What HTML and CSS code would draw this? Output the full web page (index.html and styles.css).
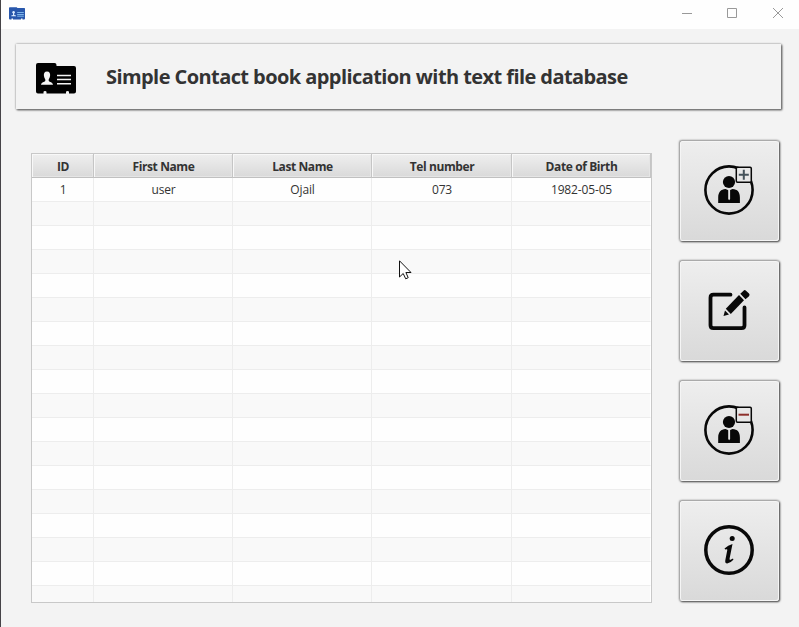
FILE: index.html
```html
<!DOCTYPE html>
<html lang="en">
<head>
<meta charset="utf-8">
<title>Contact book</title>
<link rel="stylesheet" href="styles.css">
</head>
<body>
<svg width="0" height="0" class="defs">
  <defs>
    <symbol id="person" viewBox="0 0 52 52">
      <circle cx="26" cy="27" r="23.6" fill="none" stroke="#080808" stroke-width="2.6"/>
      <circle cx="26" cy="19" r="6.1"/>
      <path d="M15.200 40V34.500C15.200 29 18 26.200 22.500 26L26 27.500L29.500 26C34.500 26.200 36.900 29 36.900 34.500V40Z"/>
      <path d="M25.200 26.500H27.100V36L26.100 37.200L25.200 36Z" fill="#e4e4e4"/>
      <rect x="33.300" y="4.200" width="15" height="15" rx="1.200" fill="#e8e8e8" stroke="#080808" stroke-width="1.500"/>
    </symbol>
  </defs>
</svg>
<div class="window">
  <header class="titlebar">
    <svg class="app-icon" width="16" height="13" viewBox="0 0 16 13"><path d="M0 1Q0 .2.800.200H7.500Q8.300.2 8.300 1H15.400Q16 1 16 1.700V11.500Q16 12.500 15 12.500H13.500V11.500H12V12.500H4V11.500H2.500V12.500H1Q0 12.500 0 11.500Z" fill="#2857ac"/><path d="M8.200 5.500H14.800M8.200 7.500H14.800M8.200 9.200H14.800" stroke="#7db5ea"/><circle cx="4.600" cy="5.200" r="1.200" fill="#dcecff"/><path d="M4 5.500H5.200V8L7 8.600V9.300H2.300V8.600L4 8Z" fill="#dcecff"/></svg>
    <svg class="controls" width="104" height="12" viewBox="0 0 104 12" fill="none" stroke="#999"><path d="M0 6.500H10"/><path d="M45.500 1.500H54.500V10.500H45.500Z"/><path d="M91 1L101 11M101 1L91 11"/></svg>
  </header>
  <main>
    <section class="banner">
      <svg class="logo" width="40" height="31" viewBox="0 0 40 31"><path d="M0 2Q0 0 2 0H18.500Q20.500 0 20.500 2V3H38Q40 3 40 5V28.500Q40 30.500 38 30.500H33V29Q33 28 31.500 28T30 29V30.500H10.500V29Q10.500 28 9 28T7.500 29V30.500H2Q0 30.500 0 28.500Z"/><path d="M11 8.500C8.500 8.500 7.700 10.300 7.900 12.500C8 14.500 9 15.500 9.300 16.500V18C8.500 19 5.200 19.300 5 21.700H17C16.800 19.300 13.500 19 12.700 18V16.500C13 15.500 14 14.500 14.100 12.500C14.300 10.300 13.500 8.500 11 8.500Z" fill="#f4f4f4"/><path d="M21 12.500H35M21 16.500H35M21 20.700H35" stroke="#f4f4f4" stroke-width="1.400"/></svg>
      <h1>Simple Contact book application with text file database</h1>
    </section>
    <div class="content">
      <div class="table-view">
        <table>
          <colgroup><col class="c-id"><col class="c-name"><col class="c-name"><col class="c-tel"><col class="c-name"></colgroup>
          <thead><tr><th>ID</th><th>First Name</th><th>Last Name</th><th>Tel number</th><th>Date of Birth</th></tr></thead>
          <tbody>
            <tr><td>1</td><td>user</td><td>Ojail</td><td>073</td><td>1982-05-05</td></tr>
            <tr><td></td><td></td><td></td><td></td><td></td></tr>
            <tr><td></td><td></td><td></td><td></td><td></td></tr>
            <tr><td></td><td></td><td></td><td></td><td></td></tr>
            <tr><td></td><td></td><td></td><td></td><td></td></tr>
            <tr><td></td><td></td><td></td><td></td><td></td></tr>
            <tr><td></td><td></td><td></td><td></td><td></td></tr>
            <tr><td></td><td></td><td></td><td></td><td></td></tr>
            <tr><td></td><td></td><td></td><td></td><td></td></tr>
            <tr><td></td><td></td><td></td><td></td><td></td></tr>
            <tr><td></td><td></td><td></td><td></td><td></td></tr>
            <tr><td></td><td></td><td></td><td></td><td></td></tr>
            <tr><td></td><td></td><td></td><td></td><td></td></tr>
            <tr><td></td><td></td><td></td><td></td><td></td></tr>
            <tr><td></td><td></td><td></td><td></td><td></td></tr>
            <tr><td></td><td></td><td></td><td></td><td></td></tr>
            <tr><td></td><td></td><td></td><td></td><td></td></tr>
            <tr><td></td><td></td><td></td><td></td><td></td></tr>
          </tbody>
        </table>
      </div>
      <nav class="actions">
        <button aria-label="Add contact"><svg width="52" height="52" fill="#080808"><use href="#person"/><path d="M40.800 6.700V16.700M35.800 11.700H45.800" stroke="#45525a" stroke-width="2"/></svg></button>
        <button aria-label="Edit contact"><svg width="52" height="52" viewBox="0 0 52 52" fill="#080808"><path d="M27.500 11.700H10.500Q7.500 11.700 7.500 14.700V42.200Q7.500 45.200 10.500 45.200H38.500Q41.500 45.200 41.500 42.200V24.500" fill="none" stroke="#080808" stroke-width="3.800" stroke-linecap="round"/><path d="M22.800 25.700L36 12L41 17.200L27.800 31Z"/><path d="M37.300 10.800L40.500 7.700Q41.700 6.500 43 7.700L46 10.500Q47.200 11.900 46 13.200L42.500 16.200Z"/><path d="M22 27.500L26 31.500L20.500 32.900Z"/></svg></button>
        <button aria-label="Delete contact"><svg width="52" height="52" fill="#080808"><use href="#person"/><path d="M35.500 11.700H46" stroke="#8e302c" stroke-width="2"/></svg></button>
        <button aria-label="About"><svg width="52" height="52" viewBox="0 0 52 52" fill="#080808"><circle cx="26" cy="27" r="23.200" fill="none" stroke="#080808" stroke-width="3.500"/><circle cx="29.200" cy="15.500" r="2.500"/><path d="M21.500 25.500Q25 22.200 29.500 21L26.600 35.500Q26.300 37.500 28 36.600L30 35.400L30.400 36.700Q27.500 39.900 24.200 40.500Q21.800 40.500 22.300 37.300L24.300 27Q24.500 25.500 22.300 26.600Z"/></svg></button>
      </nav>
    </div>
  </main>
  <svg class="cursor" width="14" height="21" viewBox="0 0 14 21"><path d="M.5.800V17L4.200 13.500L6.700 18.800L9.200 17.700L6.900 12.500H12Z" fill="#fff" stroke="#111"/></svg>
</div>
</body>
</html>
```
FILE: styles.css
```css
* { box-sizing: border-box; }
body { margin: 0; font-family: "Open Sans", "Noto Sans", sans-serif; color: #333; }
.defs { position: absolute; }
.window { position: relative; width: 799px; height: 627px; overflow: hidden; border-left: 1px solid #454347; background: #f3f3f3; }
.titlebar { display: flex; align-items: flex-start; justify-content: space-between; height: 29px; padding: 7px 13px 0 8px; background: #fefefe; }
.controls { display: block; }
main { padding: 15px 18px 0 15px; }
.banner { display: flex; align-items: center; height: 65px; padding-left: 20px; background: #f3f3f3; box-shadow: 0 0 2px #999, 1px 1px 2px #333; }
.logo { margin-top: 4px; }
h1 { margin: 0 0 0 30px; font-size: 20px; line-height: 28px; font-weight: 700; white-space: nowrap; letter-spacing: -.575px; }
.content { display: flex; justify-content: space-between; padding: 31px 2px 0 15px; }
.table-view { width: 621px; height: 450px; margin-top: 13px; overflow: hidden; border: 1px solid #c8c8c8; background: #fff; }
table { width: 619px; table-layout: fixed; border-collapse: separate; border-spacing: 0; font-size: 12px; line-height: 16px; }
.c-id { width: 62px; }
.c-name { width: 139px; }
.c-tel { width: 140px; }
th, td { height: 24px; padding: 0 0 0 1px; text-align: center; }
th { padding-top: 2px; border-right: 1px solid #c5c5c5; border-bottom: 1px solid #c0c0c0; background: linear-gradient(#efefef, #d9d9d9); box-shadow: inset 1px 1px #f8f8f8, inset -1px -1px #e5e5e5; letter-spacing: -.4px; }
td { border-right: 1px solid #ededed; border-bottom: 1px solid #ededed; background: #fefefe; letter-spacing: -.15px; }
td:last-child { border-right-color: transparent; background-clip: padding-box; }
tr:nth-child(even) td { background-color: #f9f9f9; }
.actions { display: grid; gap: 19px; align-content: start; }
button { display: grid; place-items: center; width: 100px; height: 101px; margin: 0; padding: 0 1px 4px 0; border: solid #aaa; border-width: 1px 0 0 1px; border-radius: 3px; background: linear-gradient(#eee, #d9d9d9); box-shadow: inset 0 0 0 1px #f5f5f5, 0 0 2px #aaa, 1px 1px 2px #222; }
button svg { display: block; }
.cursor { position: absolute; left: 398px; top: 260px; }
```
